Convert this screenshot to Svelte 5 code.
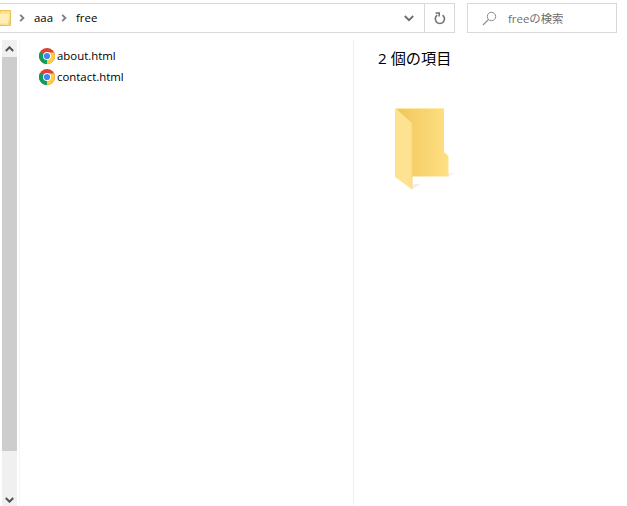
<script lang="ts">
  const files = ["about.html", "contact.html"];
</script>

{#snippet chrome()}
  <svg class="chrome" viewBox="0 0 16 16" width="16" height="16" aria-hidden="true">
    <circle cx="8" cy="8" r="8" fill="#db4437" />
    <path d="M8 8 L1.07 4 A8 8 0 0 0 8 16 Z" fill="#0f9d58" />
    <path d="M8 4.5 H15.1 A8 8 0 0 1 8 16 L8 8 Z" fill="#ffcd40" />
    <circle cx="8" cy="8" r="4" fill="#fff" />
    <circle cx="8" cy="8" r="3.1" fill="#4285f4" />
  </svg>
{/snippet}

<div class="window">
  <div class="toolbar">
    <div class="address">
      <svg class="crumb-folder" width="11" height="16" viewBox="0 0 11 16" aria-hidden="true">
        <path d="M0 .5H10.5V15.5H0Z" fill="#fde08a" stroke="#e8c15f" />
        <path d="M0 3.5H9V13.5H0Z" fill="#ffeeb5" />
        <path d="M8.5 10.5H10.5V15.5H8.5Z" fill="#f2cd6b" />
      </svg>
      <svg class="sep" width="6" height="8" viewBox="0 0 6 8" aria-hidden="true"><path d="M1.2 .8 4.4 4 1.2 7.2" fill="none" stroke="#7d7d7d" stroke-width="1.8" /></svg>
      <span class="crumb">aaa</span>
      <svg class="sep" width="6" height="8" viewBox="0 0 6 8" aria-hidden="true"><path d="M1.2 .8 4.4 4 1.2 7.2" fill="none" stroke="#7d7d7d" stroke-width="1.8" /></svg>
      <span class="crumb">free</span>
      <div class="spacer"></div>
      <div class="drop">
        <svg width="10" height="7" viewBox="0 0 10 7" aria-hidden="true"><path d="M.8 1 5 5.2 9.2 1" fill="none" stroke="#6d6d6d" stroke-width="1.8" /></svg>
      </div>
      <div class="refresh">
        <svg width="12" height="13" viewBox="0 0 12 13" aria-hidden="true">
          <path d="M8.6 3.2A4.6 4.6 0 1 1 3.2 3.2" fill="none" stroke="#707070" stroke-width="1.6" />
          <path d="M1.6 1H5.2V4.4" fill="none" stroke="#707070" stroke-width="1.5" />
        </svg>
      </div>
    </div>
    <div class="search">
      <svg width="15" height="15" viewBox="0 0 15 15" aria-hidden="true">
        <circle cx="9.5" cy="5.5" r="4.2" fill="none" stroke="#8c8c8c" />
        <path d="M6.5 8.5 1 14" stroke="#8c8c8c" stroke-width="1.1" />
      </svg>
      <span>freeの検索</span>
    </div>
  </div>

  <div class="body">
    <div class="scrollbar">
      <div class="arrow">
        <svg width="9" height="6" viewBox="0 0 9 6" aria-hidden="true"><path d="M.8 5 4.5 1.3 8.2 5" fill="none" stroke="#505050" stroke-width="2" /></svg>
      </div>
      <div class="thumb"></div>
      <div class="track"></div>
      <div class="arrow bottom">
        <svg width="9" height="6" viewBox="0 0 9 6" aria-hidden="true"><path d="M.8 1 4.5 4.7 8.2 1" fill="none" stroke="#505050" stroke-width="2" /></svg>
      </div>
    </div>

    <div class="list">
      {#each files as f}
        <div class="file">
          {@render chrome()}
          <span>{f}</span>
        </div>
      {/each}
    </div>

    <div class="preview">
      <div class="count">2 個の項目</div>
      <svg class="big-folder" width="62" height="84" viewBox="0 0 62 84" aria-hidden="true">
        <defs>
          <linearGradient id="back" x1="0" x2="1" y1="0" y2="0">
            <stop offset="0" stop-color="#f0c65c" />
            <stop offset="1" stop-color="#ffe083" />
          </linearGradient>
        </defs>
        <path d="M53 65H60L53 69Z" fill="#f3f3f3" />
        <path d="M18 81 26 76H18Z" fill="#efefef" />
        <path d="M1 .5H49V44L53.5 48V68.5H17V20Z" fill="url(#back)" />
        <path d="M1 0H49V1H1Z" fill="#ffe9a6" />
        <path d="M0 0 17 15V81.5L0 69Z" fill="#ffe28f" />
        <path d="M17 15V81" stroke="#f7d67d" />
      </svg>
    </div>
  </div>
</div>

<style>
  :global(body) {
    margin: 0;
    background: #fff;
  }
  .window {
    width: 627px;
    height: 506px;
    display: flex;
    flex-direction: column;
    overflow: hidden;
    font-family: "Open Sans", "Noto Sans CJK JP", sans-serif;
    font-size: 11.4px;
    color: #000;
  }
  .toolbar {
    display: flex;
    gap: 12px;
    height: 30px;
    margin-top: 3px;
    padding-right: 10px;
  }
  .address {
    flex: none;
    width: 455px;
    box-sizing: border-box;
    display: flex;
    align-items: center;
    border: 1px solid #d9d9d9;
    border-left: 0;
  }
  .crumb-folder {
    margin-right: 8px;
  }
  .sep {
    margin-right: 9px;
  }
  .crumb {
    margin-right: 8px;
    line-height: 15px;
    margin-top: -1px;
  }
  .spacer {
    flex: 1;
  }
  .drop {
    width: 28px;
    margin-right: 2px;
    padding-left: 2px;
    box-sizing: border-box;
    display: flex;
    justify-content: center;
  }
  .refresh {
    align-self: stretch;
    width: 30px;
    box-sizing: border-box;
    border-left: 1px solid #d9d9d9;
    display: flex;
    align-items: center;
    justify-content: center;
  }
  .search {
    flex: 1;
    box-sizing: border-box;
    display: flex;
    align-items: center;
    gap: 11px;
    padding-left: 14px;
    border: 1px solid #d9d9d9;
    color: #6d6d6d;
  }
  .body {
    flex: 1;
    display: flex;
    margin-top: 7px;
    min-height: 0;
  }
  .scrollbar {
    flex: none;
    width: 15px;
    margin-left: 2px;
    display: flex;
    flex-direction: column;
    background: #f0f0f0;
  }
  .arrow {
    height: 17px;
    flex: none;
    display: flex;
    align-items: center;
    justify-content: center;
  }
  .arrow.bottom {
    align-items: flex-end;
    box-sizing: border-box;
    padding-bottom: 3px;
  }
  .thumb {
    height: 394px;
    background: #cdcdcd;
  }
  .track {
    flex: 1;
  }
  .list {
    flex: none;
    width: 335px;
    margin-left: 2px;
    margin-bottom: 1px;
    box-sizing: border-box;
    padding: 5px 0 0 19px;
    border-left: 1px solid #f5f5f5;
    border-right: 1px solid #f0f0f0;
  }
  .file {
    height: 21px;
    display: flex;
    align-items: center;
    gap: 2px;
  }
  .preview {
    flex: 1;
    padding: 8px 0 0 24px;
  }
  .count {
    font-size: 15.2px;
    line-height: 20px;
  }
  .big-folder {
    display: block;
    margin: 40px 0 0 17px;
  }
</style>
